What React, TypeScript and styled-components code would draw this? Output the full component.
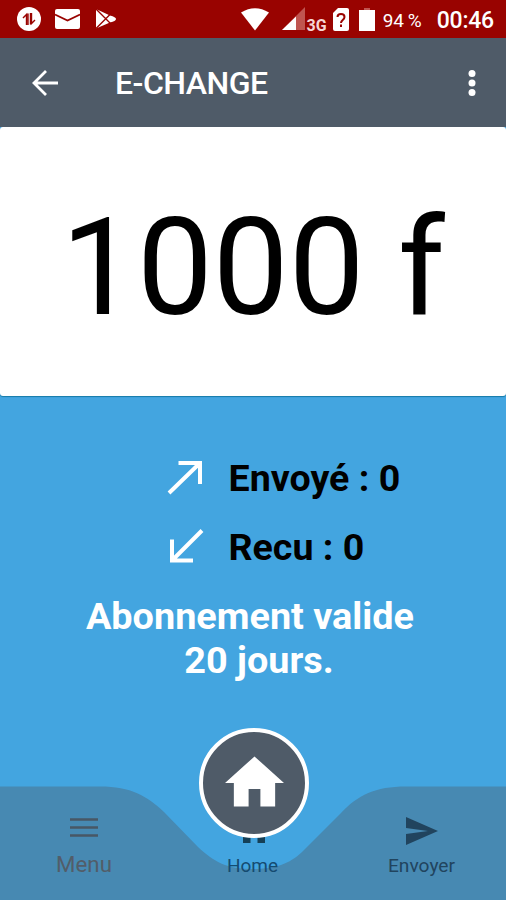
import React from "react";
import styled, { createGlobalStyle } from "styled-components";

const Global = createGlobalStyle`
  * { box-sizing: border-box; }
  body { margin: 0; background: #43a5e0; font-family: Roboto, sans-serif; }
`;

const Screen = styled.main`
  width: 506px;
  height: 900px;
  overflow: hidden;
  display: flex;
  flex-direction: column;
  background: #43a5e0;
`;

const StatusBar = styled.header`
  height: 38px;
  flex: none;
  display: flex;
  align-items: center;
  justify-content: space-between;
  background: #990300;
  color: #fff;
  padding: 0 12px 0 16px;
`;

const Group = styled.div`
  display: flex;
  align-items: center;
`;

const Glyph = styled.svg<{ $gap?: number }>`
  display: block;
  flex: none;
  margin-left: ${(p) => p.$gap ?? 0}px;
`;

const StatusText = styled.span<{ $size: number; $gap: number; $weight?: number; $spacing?: number }>`
  font-size: ${(p) => p.$size}px;
  font-weight: ${(p) => p.$weight ?? 400};
  letter-spacing: ${(p) => p.$spacing ?? 0}px;
  word-spacing: -1px;
  margin-left: ${(p) => p.$gap}px;
  line-height: 38px;
  padding-top: 3px;
  white-space: pre;
`;

const NetworkType = styled(StatusText)`
  line-height: 16px;
  padding-top: 14px;
  color: #f6d6d5;
`;

const AppBar = styled.nav`
  height: 89px;
  flex: none;
  display: flex;
  align-items: center;
  background: #4f5b68;
  padding: 0 30px 0 32px;
`;

const Title = styled.h1`
  flex: 1;
  margin: 1px 0 0 57px;
  font-size: 32px;
  font-weight: 500;
  line-height: 35px;
  letter-spacing: -0.5px;
  color: #fff;
`;

const Balance = styled.section`
  height: 269px;
  flex: none;
  display: flex;
  justify-content: center;
  background: #fff;
  border-radius: 3px;
  box-shadow: 0 1px 1px #167ba8;
  font-size: 135px;
  line-height: 158px;
  padding-top: 62px;
  color: #000;
  white-space: pre;
`;

const Summary = styled.section`
  flex: 1;
  display: flex;
  flex-direction: column;
  padding-top: 47px;
`;

const Counter = styled.div`
  height: 69px;
  display: flex;
  align-items: center;
  padding-left: 167px;
`;

const CounterText = styled.span`
  margin-left: 23.5px;
  font-size: 37.6px;
  font-weight: 700;
  color: #000;
  white-space: pre;
`;

const Subscription = styled.p`
  margin: 13px 0 0;
  padding-right: 6px;
  text-align: center;
  font-size: 37.8px;
  line-height: 44px;
  font-weight: 700;
  color: #fff;
`;

const DaysLeft = styled.span`
  display: block;
  padding-left: 18px;
`;

const BottomBar = styled.footer`
  position: relative;
  height: 172px;
  flex: none;
`;

const Wave = styled.svg`
  position: absolute;
  inset: 0;
`;

const Tabs = styled.div`
  position: relative;
  display: grid;
  grid-template-columns: 168px 169px 169px;
  padding-top: 86px;
`;

const Tab = styled.div<{ $color: string; $size: number; $line?: number }>`
  display: flex;
  flex-direction: column;
  align-items: center;
  color: ${(p) => p.$color};
  font-size: ${(p) => p.$size}px;
  line-height: ${(p) => p.$line ?? 28}px;
`;

const TabIcon = styled.svg`
  display: block;
  height: 38px;
`;

const HomeButton = styled.button`
  position: absolute;
  left: 199px;
  top: 0;
  width: 110px;
  height: 110px;
  padding: 0 0 3px;
  display: flex;
  align-items: center;
  justify-content: center;
  border: 4px solid #fff;
  border-radius: 50%;
  background: #4f5b68;
`;

export default function App() {
  return (
    <>
      <Global />
      <Screen>
        <StatusBar>
          <Group>
            <Glyph width="26" height="26" viewBox="0 0 26 26">
              <circle cx="13" cy="13" r="12" fill="#fff" />
              <path d="M7 12 10.500 8.500V19M15.500 7V17.500L19 14M12 7.500V19M14.500 7V18.500" fill="none" stroke="#990300" strokeWidth="1.400" />
            </Glyph>
            <Glyph $gap={13} width="25" height="20" viewBox="0 0 25 20">
              <rect width="25" height="20" rx="2" fill="#fff" />
              <path d="M0 5.500 12.500 11.500 25 5.500" fill="none" stroke="#990300" strokeWidth="1.800" />
            </Glyph>
            <Glyph $gap={15} width="22" height="22" viewBox="0 0 22 22">
              <path d="M1 1 15 7.500Q21 9 21 11T15 14.500L1 20.500Z" fill="#fff" />
              <path d="M1 1 15.500 15.500M1 20.500 15.500 6" stroke="#990300" strokeWidth="1.400" />
            </Glyph>
          </Group>
          <Group>
            <Glyph width="28" height="23" viewBox="0 0 28 23">
              <path d="M0 4.500Q14-4 28 4.500L14 22.500Z" fill="#fff" />
            </Glyph>
            <Glyph $gap={13} width="24" height="24" viewBox="0 0 24 24">
              <path d="M0 23 23 0V23Z" fill="#c05550" />
              <path d="M0 23 14 9.500V23Z" fill="#fff" />
            </Glyph>
            <NetworkType $size={16} $gap={1} $weight={700}>3G</NetworkType>
            <Glyph $gap={6} width="16" height="23" viewBox="0 0 16 23">
              <path d="M5 0H14Q16 0 16 2V21Q16 23 14 23H2Q0 23 0 21V5Z" fill="#fff" />
              <path d="M4.500 9Q4.500 6 8 6T11.500 9C11.500 12 8 12 8 15M8 16.500V19" fill="none" stroke="#990300" strokeWidth="2" />
            </Glyph>
            <Glyph $gap={10} width="16" height="23" viewBox="0 0 16 23">
              <path d="M5 0H11V2H5Z" fill="#c05550" />
              <path d="M0 2H16V23H0Z" fill="#fff" />
            </Glyph>
            <StatusText $size={19} $gap={8}>94 %</StatusText>
            <StatusText $size={23} $gap={15} $weight={500} $spacing={-0.2}>00:46</StatusText>
          </Group>
        </StatusBar>
        <AppBar>
          <Glyph width="26" height="26" viewBox="0 0 26 26">
            <path d="M26 13H2M14 1 2 13 14 25" fill="none" stroke="#fff" strokeWidth="2.800" />
          </Glyph>
          <Title>E-CHANGE</Title>
          <Glyph width="8" height="28" viewBox="0 0 8 28">
            <circle cx="4" cy="4.500" r="3.500" fill="#fff" />
            <circle cx="4" cy="14" r="3.500" fill="#fff" />
            <circle cx="4" cy="23.500" r="3.500" fill="#fff" />
          </Glyph>
        </AppBar>
        <Balance>1000 f</Balance>
        <Summary>
          <Counter>
            <Glyph width="38" height="38" viewBox="0 0 38 38">
              <path d="M11.500 4H33V25M33 4 2 34" fill="none" stroke="#fff" strokeWidth="4" />
            </Glyph>
            <CounterText>Envoyé : 0</CounterText>
          </Counter>
          <Counter>
            <Glyph width="38" height="38" viewBox="0 0 38 38">
              <path d="M26 32.500H5V11.500M5 32.500 35 2.500" fill="none" stroke="#fff" strokeWidth="4" />
            </Glyph>
            <CounterText>Recu : 0</CounterText>
          </Counter>
          <Subscription>
            Abonnement valide
            <DaysLeft>20 jours.</DaysLeft>
          </Subscription>
        </Summary>
        <BottomBar>
          <Wave width="506" height="172" viewBox="0 0 506 172">
            <path
              d="M0 58.500H100C131 58.500 147 68 164 84L198 119C214 134 227 141 253 141S292 134 304 122L341 85C358 67 375 58.500 406 58.500H506V172H0Z"
              fill="#4789b2"
            />
          </Wave>
          <Tabs>
            <Tab $color="#525d69" $size={22.3} $line={24}>
              <TabIcon width="30" viewBox="0 0 30 38">
                <path d="M1 5.500H29M1 13.500H29M1 21.500H29" stroke="#485765" strokeWidth="2.500" />
              </TabIcon>
              Menu
            </Tab>
            <Tab $color="#154b70" $size={19}>
              <TabIcon width="36" viewBox="0 0 36 38">
                <path d="M8 22H15.500V29H8ZM22.500 22H30V29H22.500Z" fill="#153f56" />
              </TabIcon>
              Home
            </Tab>
            <Tab $color="#21445e" $size={19.2}>
              <TabIcon width="34" viewBox="0 0 34 38">
                <path d="M1 3 33 17 1 31V20L23 17 1 14Z" fill="#21445e" />
              </TabIcon>
              Envoyer
            </Tab>
          </Tabs>
          <HomeButton aria-label="Home">
            <Glyph width="59" height="52" viewBox="0 0 60 52">
              <path d="M30 0 60 27H51V51H36V33H24V51H9V27H0Z" fill="#fff" />
            </Glyph>
          </HomeButton>
        </BottomBar>
      </Screen>
    </>
  );
}
